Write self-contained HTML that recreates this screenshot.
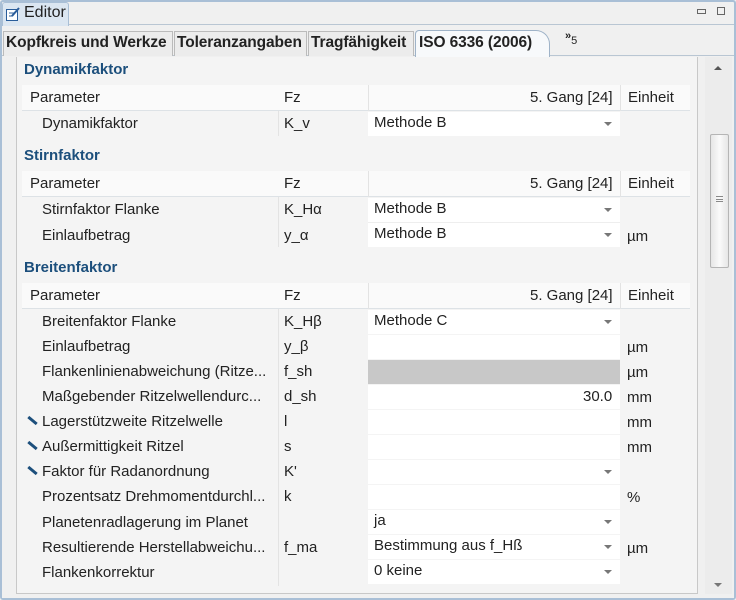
<!DOCTYPE html>
<html><head><meta charset="utf-8"><style>
*{margin:0;padding:0;box-sizing:border-box}
body{width:736px;height:600px;overflow:hidden;background:#f0f0f0;font-family:"Liberation Sans",sans-serif;font-size:15px;color:#222;position:relative}
.a{position:absolute;white-space:nowrap}
.sec{color:#1c4f7c;font-weight:bold;font-size:15px}
.hdr{background:#fafafa;border-bottom:1px solid #dde2e6}
.cell{position:absolute;background:#fff}
.dd{position:absolute;width:0;height:0;border-left:4px solid transparent;border-right:4px solid transparent;border-top:4px solid #777}
.pen{position:absolute;width:11px;height:3px;background:#1c4f7c;transform:rotate(40deg)}
.tb{font-weight:bold;font-size:15.5px;letter-spacing:-0.1px}
</style></head><body>
<div class="a" style="left:0;top:0;width:736px;height:600px;border:2px solid #a9bfd6;border-radius:3px"></div>
<div class="a" style="left:2px;top:24px;width:732px;height:574px;background:#f0f0f0;border-top:1px solid #b9c6d3"></div>
<div class="a" style="left:2px;top:2px;width:67px;height:24px;background:#dbe6f1;border:1px solid #a9bfd6;border-bottom:none;border-radius:3px 3px 0 0"></div>
<svg class="a" style="left:5px;top:6px" width="16" height="16" viewBox="0 0 16 16"><rect x="1.5" y="3.5" width="11" height="11" fill="#fff" stroke="#2a5d9a"/><path d="M4 7h5M4 10h4" stroke="#2a5d9a"/><path d="M7 10l7-8" stroke="#2a5d9a" stroke-width="2"/></svg>
<div class="a" style="left:24px;top:4px;font-size:16px">Editor</div>
<div class="a" style="left:697px;top:9px;width:9px;height:5px;border:1px solid #666"></div>
<div class="a" style="left:717px;top:7px;width:8px;height:8px;border:1px solid #666"></div>
<div class="a" style="left:2px;top:29px;width:732px;height:27px;border-bottom:1px solid #b9c6d3"></div>
<div class="a" style="left:3px;top:31px;width:170px;height:25px;background:#ececec;border:1px solid #bbb;border-bottom:none"></div>
<div class="a" style="left:174px;top:31px;width:133px;height:25px;background:#ececec;border:1px solid #bbb;border-bottom:none"></div>
<div class="a" style="left:308px;top:31px;width:106px;height:25px;background:#ececec;border:1px solid #bbb;border-bottom:none"></div>
<div class="a" style="left:415px;top:30px;width:135px;height:27px;background:#f7f9fb;border:1px solid #9fb3c8;border-bottom:none;border-radius:4px 14px 0 0"></div>
<div class="a tb" style="left:6px;top:34px">Kopfkreis und Werkze</div>
<div class="a tb" style="left:177px;top:34px">Toleranzangaben</div>
<div class="a tb" style="left:311px;top:34px">Tragfähigkeit</div>
<div class="a tb" style="left:419px;top:34px">ISO 6336 (2006)</div>
<div class="a" style="left:565px;top:30px;font-size:11px;font-weight:bold">»<span style="position:relative;top:5px;font-weight:normal">5</span></div>
<div class="a" style="left:16px;top:57px;width:682px;height:537px;background:#f4f4f4;border-left:1px solid #c8c8c8;border-right:1px solid #c8c8c8;border-bottom:1px solid #c8c8c8"></div>
<div class="a" style="left:705px;top:57px;width:27px;height:537px;background:#ececec"></div>
<div class="dd" style="left:714px;top:66px;border-top:none;border-bottom:4px solid #555"></div>
<div class="a" style="left:710px;top:134px;width:19px;height:134px;background:linear-gradient(90deg,#e6e6e6,#fafafa,#e6e6e6);border:1px solid #b5b5b5;border-radius:2px"></div>
<div class="a" style="left:716px;top:196px;width:7px;height:6px;border-top:1px solid #888;border-bottom:1px solid #888"></div>
<div class="a" style="left:716px;top:199px;width:7px;height:1px;background:#888"></div>
<div class="dd" style="left:714px;top:583px"></div>
<div class="a" style="left:278px;top:85px;width:1px;height:51px;background:#e3e3e3"></div>
<div class="a" style="left:278px;top:171px;width:1px;height:76px;background:#e3e3e3"></div>
<div class="a" style="left:278px;top:283px;width:1px;height:303px;background:#e3e3e3"></div>

<div class="a sec" style="left:24px;top:61px">Dynamikfaktor</div>
<div class="a hdr" style="left:22px;top:85px;width:668px;height:26px"></div>
<div class="a" style="left:30px;top:89px">Parameter</div><div class="a" style="left:284px;top:89px">Fz</div>
<div class="a" style="left:368px;top:85px;width:1px;height:26px;background:#e3e3e3"></div><div class="a" style="left:620px;top:85px;width:1px;height:26px;background:#e3e3e3"></div>
<div class="a" style="left:530px;top:89px">5. Gang [24]</div><div class="a" style="left:628px;top:89px">Einheit</div>
<div class="cell" style="left:368px;top:112px;width:252px;height:24px"></div>
<div class="a" style="left:42px;top:115px">Dynamikfaktor</div><div class="a" style="left:284px;top:115px">K_v</div>
<div class="a" style="left:374px;top:114px">Methode B</div><div class="dd" style="left:604px;top:122px"></div>

<div class="a sec" style="left:24px;top:147px">Stirnfaktor</div>
<div class="a hdr" style="left:22px;top:171px;width:668px;height:26px"></div>
<div class="a" style="left:30px;top:175px">Parameter</div><div class="a" style="left:284px;top:175px">Fz</div>
<div class="a" style="left:368px;top:171px;width:1px;height:26px;background:#e3e3e3"></div><div class="a" style="left:620px;top:171px;width:1px;height:26px;background:#e3e3e3"></div>
<div class="a" style="left:530px;top:175px">5. Gang [24]</div><div class="a" style="left:628px;top:175px">Einheit</div>
<div class="cell" style="left:368px;top:198px;width:252px;height:49px"></div>
<div class="a" style="left:368px;top:222px;width:252px;height:1px;background:#eee"></div>
<div class="a" style="left:42px;top:201px">Stirnfaktor Flanke</div><div class="a" style="left:284px;top:201px">K_Hα</div>
<div class="a" style="left:374px;top:200px">Methode B</div><div class="dd" style="left:604px;top:208px"></div>
<div class="a" style="left:42px;top:227px">Einlaufbetrag</div><div class="a" style="left:284px;top:227px">y_α</div>
<div class="a" style="left:374px;top:225px">Methode B</div><div class="dd" style="left:604px;top:233px"></div><div class="a" style="left:627px;top:228px">µm</div>

<div class="a sec" style="left:24px;top:259px">Breitenfaktor</div>
<div class="a hdr" style="left:22px;top:283px;width:668px;height:26px"></div>
<div class="a" style="left:30px;top:287px">Parameter</div><div class="a" style="left:284px;top:287px">Fz</div>
<div class="a" style="left:368px;top:283px;width:1px;height:26px;background:#e3e3e3"></div><div class="a" style="left:620px;top:283px;width:1px;height:26px;background:#e3e3e3"></div>
<div class="a" style="left:530px;top:287px">5. Gang [24]</div><div class="a" style="left:628px;top:287px">Einheit</div>

<div class="cell" style="left:368px;top:310px;width:252px;height:24px"></div>
<div class="cell" style="left:368px;top:335px;width:252px;height:24px"></div>
<div class="cell" style="left:368px;top:360px;width:252px;height:24px;background:#c8c8c8"></div>
<div class="cell" style="left:368px;top:385px;width:252px;height:24px"></div>
<div class="cell" style="left:368px;top:410px;width:252px;height:24px"></div>
<div class="cell" style="left:368px;top:435px;width:252px;height:24px"></div>
<div class="cell" style="left:368px;top:460px;width:252px;height:24px"></div>
<div class="cell" style="left:368px;top:485px;width:252px;height:24px"></div>
<div class="cell" style="left:368px;top:510px;width:252px;height:24px"></div>
<div class="cell" style="left:368px;top:535px;width:252px;height:24px"></div>
<div class="cell" style="left:368px;top:560px;width:252px;height:24px"></div>

<div class="a" style="left:42px;top:313px">Breitenfaktor Flanke</div><div class="a" style="left:284px;top:313px">K_Hβ</div>
<div class="a" style="left:374px;top:312px">Methode C</div><div class="dd" style="left:604px;top:320px"></div>
<div class="a" style="left:42px;top:338px">Einlaufbetrag</div><div class="a" style="left:284px;top:338px">y_β</div><div class="a" style="left:627px;top:339px">µm</div>
<div class="a" style="left:42px;top:363px">Flankenlinienabweichung (Ritze...</div><div class="a" style="left:284px;top:363px">f_sh</div><div class="a" style="left:627px;top:364px">µm</div>
<div class="a" style="left:42px;top:388px">Maßgebender Ritzelwellendurc...</div><div class="a" style="left:284px;top:388px">d_sh</div><div class="a" style="left:583px;top:388px">30.0</div><div class="a" style="left:627px;top:389px">mm</div>
<div class="pen" style="left:27px;top:419px"></div>
<div class="a" style="left:42px;top:413px">Lagerstützweite Ritzelwelle</div><div class="a" style="left:284px;top:413px">l</div><div class="a" style="left:627px;top:414px">mm</div>
<div class="pen" style="left:27px;top:444px"></div>
<div class="a" style="left:42px;top:438px">Außermittigkeit Ritzel</div><div class="a" style="left:284px;top:438px">s</div><div class="a" style="left:627px;top:439px">mm</div>
<div class="pen" style="left:27px;top:469px"></div>
<div class="a" style="left:42px;top:463px">Faktor für Radanordnung</div><div class="a" style="left:284px;top:463px">K'</div><div class="dd" style="left:604px;top:470px"></div>
<div class="a" style="left:42px;top:488px">Prozentsatz Drehmomentdurchl...</div><div class="a" style="left:284px;top:488px">k</div><div class="a" style="left:627px;top:489px">%</div>
<div class="a" style="left:42px;top:514px">Planetenradlagerung im Planet</div>
<div class="a" style="left:374px;top:512px">ja</div><div class="dd" style="left:604px;top:520px"></div>
<div class="a" style="left:42px;top:539px">Resultierende Herstellabweichu...</div><div class="a" style="left:284px;top:539px">f_ma</div>
<div class="a" style="left:374px;top:537px">Bestimmung aus f_Hß</div><div class="dd" style="left:604px;top:545px"></div><div class="a" style="left:627px;top:540px">µm</div>
<div class="a" style="left:42px;top:564px">Flankenkorrektur</div>
<div class="a" style="left:374px;top:562px">0 keine</div><div class="dd" style="left:604px;top:570px"></div>
</body></html>
